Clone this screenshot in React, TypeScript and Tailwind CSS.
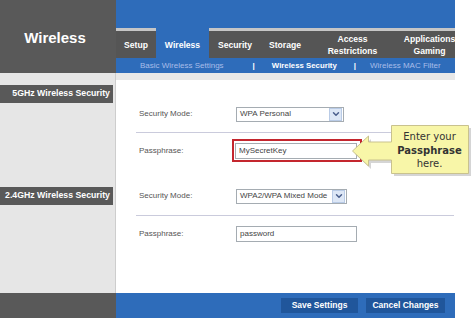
import { ChevronDown } from "lucide-react";

const tabs = [
  { label: "Setup", w: "w-[40px]" },
  { label: "Wireless", w: "w-[53px]", active: true },
  { label: "Security", w: "w-[52px]" },
  { label: "Storage", w: "w-[48px]" },
  { label: "Access\nRestrictions", w: "w-[87px]" },
  { label: "Applications\nGaming", w: "w-[59px]", pad: true },
];

function Select({ value, w }: { value: string; w: string }) {
  return (
    <div className={`${w} h-[15px] flex items-center bg-white border border-[#a5acb2]`}>
      <span className="flex-1 pl-[3px] text-[8px] text-[#444] whitespace-nowrap">{value}</span>
      <span className="w-[13px] h-[13px] mr-px flex items-center justify-center bg-[#dde7f6] border border-[#b9cbe6]">
        <ChevronDown size={10} strokeWidth={3.5} className="text-[#4a5e8c]" />
      </span>
    </div>
  );
}

function Field({ value, w }: { value: string; w: string }) {
  return (
    <div className={`${w} h-[16px] flex items-center bg-white border border-[#a5acb2] pl-[3px] text-[8px] text-[#444]`}>
      {value}
    </div>
  );
}

function Label({ children, w = "w-[120px]" }: { children: string; w?: string }) {
  return <span className={`${w} shrink-0 pl-[23px] text-[8px] text-[#555]`}>{children}</span>;
}

export default function App() {
  return (
    <div className="relative w-[474px] h-[321px] bg-white overflow-hidden font-['Liberation_Sans',Arial,sans-serif]">
      <div className="w-[455px] overflow-hidden">
        {/* Header */}
        <div className="flex h-[73px]">
          <div className="w-[116px] shrink-0 bg-[#595959] flex items-center justify-center pt-[3px] pr-[6px] text-white font-bold text-[15px]">
            Wireless
          </div>
          <div className="w-[339px] shrink-0 overflow-hidden flex flex-col">
            <div className="h-[28px] bg-[#2e6cba]" />
            <div className="h-[30px] flex bg-[#555555]">
              {tabs.map((t) => (
                <div
                  key={t.label}
                  className={`${t.w} shrink-0 h-full flex items-center justify-center border-t-[3px] whitespace-pre text-center leading-[12px] font-bold text-[8.6px] text-white ${
                    t.active ? "bg-[#2e6cba] border-[#2e6cba]" : "border-[#c6c6c6]"
                  } ${t.pad ? "pl-[8px]" : ""}`}
                >
                  {t.label}
                </div>
              ))}
            </div>
            <div className="h-[15px] bg-[#2e6cba] flex items-center pl-[24px] text-[8px] whitespace-nowrap">
              <span className="text-[#a9bde9]">Basic Wireless Settings</span>
              <span className="ml-[29px] text-white font-bold">|</span>
              <span className="ml-[17px] text-white font-bold text-[7.8px]">Wireless Security</span>
              <span className="ml-[17px] text-white font-bold">|</span>
              <span className="ml-[14px] text-[#a9bde9]">Wireless MAC Filter</span>
            </div>
          </div>
        </div>

        {/* Body */}
        <div className="flex h-[220px]">
          <div className="w-[116px] shrink-0 bg-[#e6e6e6] border-r border-[#cdcdcd] flex flex-col pt-[12px]">
            <div className="w-[113px] h-[18px] bg-[#595959] flex items-center justify-end pr-[3px] text-white font-bold text-[8.75px]">
              5GHz Wireless Security
            </div>
            <div className="w-[113px] h-[18px] mt-[84px] bg-[#595959] flex items-center justify-end pr-[3px] text-white font-bold text-[8.75px]">
              2.4GHz Wireless Security
            </div>
          </div>
          <div className="w-[339px] shrink-0 bg-white border-t-[7px] border-[#e8e8e8] flex flex-col pt-[27px]">
            <div className="flex items-center h-[14px]">
              <Label>Security Mode:</Label>
              <Select value="WPA Personal" w="w-[108px]" />
            </div>
            <div className="ml-[20px] mr-px mt-[11px] h-px bg-[#cacbdc]" />
            <div className="flex items-center mt-[6px] h-[23px]">
              <Label w="w-[116px]">Passphrase:</Label>
              <div className="border-2 border-[#c4262e] pl-px pr-[3px] py-[1px] h-[23px] flex items-center">
                <Field value="MySecretKey" w="w-[122px]" />
              </div>
            </div>
            <div className="flex items-center mt-[27px] h-[14px]">
              <Label>Security Mode:</Label>
              <Select value="WPA2/WPA Mixed Mode" w="w-[111px]" />
            </div>
            <div className="ml-[20px] mr-px mt-[12px] h-px bg-[#cacbdc]" />
            <div className="flex items-center mt-[10px] h-[16px]">
              <Label>Passphrase:</Label>
              <Field value="password" w="w-[121px]" />
            </div>
          </div>
        </div>

        {/* Footer */}
        <div className="flex h-[25px]">
          <div className="w-[116px] shrink-0 bg-[#595959]" />
          <div className="w-[339px] shrink-0 bg-[#2e6cba] flex items-center justify-end gap-[8px] pr-[10px]">
            <div className="w-[77px] h-[15px] bg-[#20569b] flex items-center justify-center text-white font-bold text-[8.5px]">
              Save Settings
            </div>
            <div className="w-[79px] h-[15px] bg-[#20569b] flex items-center justify-center text-white font-bold text-[8.5px]">
              Cancel Changes
            </div>
          </div>
        </div>
      </div>

      {/* Callout */}
      <div className="absolute left-[352px] top-[125px] w-[120px] h-[54px]">
        <svg width="120" height="54" viewBox="0 0 120 54" className="absolute left-0 top-0">
          <polygon
            points="3,29 19,14 19,20 42,20 42,3 119,3 119,51 42,51 42,38 19,38 19,44"
            fill="#b9b9b9"
            opacity="0.6"
          />
          <polygon
            points="0.5,26 16.5,11 16.5,17 39.5,17 39.5,0.5 116.5,0.5 116.5,48.5 39.5,48.5 39.5,35 16.5,35 16.5,41"
            fill="#f8f6a8"
            stroke="#c9c28e"
            strokeWidth="1"
          />
        </svg>
        <div className="absolute left-[39px] top-[5px] w-[77px] text-center text-[10px] leading-[13.5px] text-[#333] font-['DejaVu_Sans',Verdana,sans-serif]">
          Enter your
          <br />
          <span className="font-bold">Passphrase</span>
          <br />
          here.
        </div>
      </div>
    </div>
  );
}
